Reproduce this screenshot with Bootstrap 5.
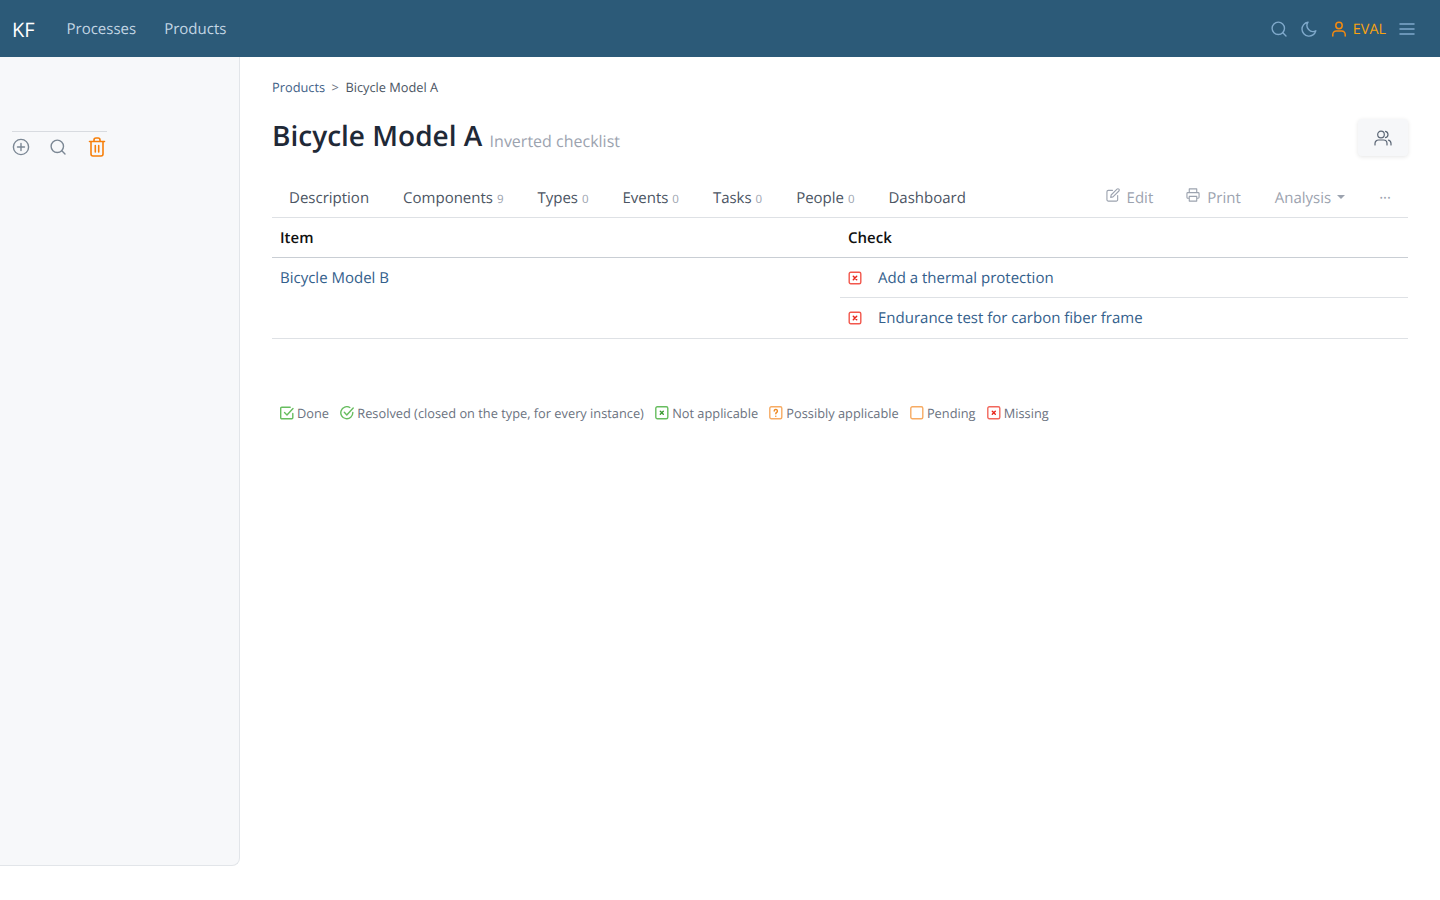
<!DOCTYPE html>
<html lang="en">
<head>
  <meta charset="UTF-8">
  <title>Bicycle Model A</title>
  <meta name="viewport" content="width=device-width, initial-scale=1" />
  <link href="https://cdn.jsdelivr.net/npm/bootstrap@5.3.2/dist/css/bootstrap.min.css" rel="stylesheet">
  <style>
    body {
      background: #fff;
      font-family: "Open Sans", sans-serif;
      font-size: 15px;
      color: #1f2937;
      height: 900px;
      overflow: hidden;
      text-rendering: geometricPrecision;
    }
    svg { display: block; fill: none; stroke: currentColor; stroke-width: 2; stroke-linecap: round; stroke-linejoin: round; }
    a { text-decoration: none; }
    .top-bar { height: 57px; background: #2c5a78; padding: 2px 25px 0 12px; }
    .top-brand { color: #fff; font-size: 20px; width: 54.5px; }
    .top-link { color: #c3d6e4; font-size: 15px; margin-right: 28px; }
    .top-icon { color: #7fa9cb; }
    .top-user { color: #f68a0e; }
    .top-eval { color: #f9a30f; font-size: 14.4px; }
    .side-panel { width: 240px; height: 809px; background: #f7f8fa; border-right: 1px solid #e2e5e9; border-bottom: 1px solid #e2e5e9; border-bottom-right-radius: 8px; padding: 74px 0 0 12px; flex-shrink: 0; }
    .side-tools { width: 95px; border-top: 1px solid #d8dbe0; padding-top: 5px; gap: 20px; }
    .main-pane { padding: 22px 32px 0; flex-grow: 1; min-width: 0; }
    .crumbs { font-size: 12.8px; line-height: 17px; color: #4b5563; }
    .crumbs a { color: #3f6288; }
    .crumb-sep { margin: 0 6.5px; color: #6b7280; }
    .title-row { margin-top: 21px; height: 38px; }
    .page-title { font-size: 28px; font-weight: 600; line-height: 38px; height: 38px; margin: 0; color: #1f2937; }
    .page-sub { font-size: 16px; color: #9ca3af; font-weight: 400; vertical-align: -1px; }
    .people-btn { width: 50px; height: 37px; margin-top: 2px; background: #f6f7f9; border-radius: 4px; box-shadow: 0 1px 4px rgba(0,0,0,.1); color: #5b6675; }
    .tab-row { border-bottom: 1px solid #dee1e5; height: 38px; margin-top: 25px; }
    .tab-item { color: #4b5563; padding: 0 17px 2px; font-size: 15px; line-height: 34px; }
    .tab-count { color: #9ca3af; font-size: 11.5px; line-height: 1; }
    .tab-act { color: #9ca3af; }
    .tab-edit { padding-right: 16px; }
    .tab-glyph { margin-right: 7px; margin-top: -6px; stroke-width: 1.2; }
    .grid-head { font-weight: 600; font-size: 15px; color: #111; height: 40px; padding-top: 2px; border-bottom: 1px solid #c9ced4; }
    .grid-head > div, .grid-body > div { width: 50%; padding-left: 8px; }
    .grid-body { border-bottom: 1px solid #dee1e5; }
    .grid-body a, .check-row a { color: #33608c; }
    .grid-body > .check-col { padding-left: 0; }
    .grid-body > .item-col { padding-top: 10px; line-height: 20px; }
    .check-row { height: 40px; padding-left: 8px; gap: 16px; line-height: 20px; }
    .check-row:first-child { padding-top: 1px; border-bottom: 1px solid #dee1e5; }
    .key-row { margin-top: 64px; padding-left: 8px; font-size: 12.8px; color: #6b7280; gap: 11.25px; line-height: 20px; }
    .key-item { gap: 3px; }
    .st-box { stroke-width: 1.4; }
  </style>
</head>
<body>

<nav class="top-bar d-flex align-items-center">
  <a href="#" class="top-brand">KF</a>
  <a href="#" class="top-link">Processes</a>
  <a href="#" class="top-link">Products</a>
  <div class="ms-auto d-flex align-items-center">
    <svg class="top-icon" width="16" height="16" viewBox="0 0 16 16" style="stroke-width:1.4"><circle cx="7.300" cy="7.300" r="6.200"/><path d="M11.800 11.800 15 15"/></svg>
    <svg class="top-icon" width="16" height="16" viewBox="0 0 16 16" style="stroke-width:1.4;margin-left:14px"><path d="M7 1.200a7 7 0 1 0 7.800 8.600A6 6 0 0 1 7 1.200z"/></svg>
    <svg class="top-user" width="16" height="16" viewBox="0 0 16 16" style="stroke-width:1.5;margin-left:14px"><circle cx="8" cy="4.500" r="3.200"/><path d="M1.800 15v-1.500a3.500 3.500 0 0 1 3.500-3.500h5.400a3.500 3.500 0 0 1 3.500 3.500V15"/></svg>
    <span class="top-eval" style="margin-left:6px">EVAL</span>
    <svg class="top-icon" width="16" height="16" viewBox="0 0 16 16" style="stroke-width:1.5;margin-left:13px"><path d="M1 3h14M1 8h14M1 13h14"/></svg>
  </div>
</nav>

<div class="d-flex">
  <aside class="side-panel">
    <div class="side-tools d-flex align-items-center">
      <svg width="18" height="18" viewBox="0 0 18 18" style="color:#7b8794;stroke-width:1.4"><circle cx="9" cy="9" r="7.600"/><path d="M9 5.500v7M5.500 9h7"/></svg>
      <svg width="16" height="16" viewBox="0 0 16 16" style="color:#7b8794;stroke-width:1.4"><circle cx="7.300" cy="7.300" r="6.200"/><path d="M11.800 11.800 15 15"/></svg>
      <svg width="18" height="20" viewBox="0 0 18 20" style="color:#f77f0a;stroke-width:1.600;margin-left:2px"><path d="M1.500 4.500h15M3 4.500V17a2 2 0 0 0 2 2h8a2 2 0 0 0 2-2V4.500M6 4.500V3a2 2 0 0 1 2-2h2a2 2 0 0 1 2 2v1.500M7.300 8.500v6.500M10.700 8.500v6.500"/></svg>
    </div>
  </aside>

  <main class="main-pane">
    <div class="crumbs"><a href="#">Products</a><span class="crumb-sep">&gt;</span>Bicycle Model A</div>

    <div class="title-row d-flex justify-content-between align-items-start">
      <h1 class="page-title">Bicycle Model A <span class="page-sub">Inverted checklist</span></h1>
      <div class="people-btn d-flex align-items-center justify-content-center">
        <svg width="18" height="16" viewBox="0 0 18 16" style="stroke-width:1.200"><circle cx="7" cy="4.500" r="3.300"/><path d="M1 15v-1.500A3.500 3.500 0 0 1 4.500 10h5a3.500 3.500 0 0 1 3.500 3.500V15M11.500 1.300a3.300 3.300 0 0 1 0 6.400M14.500 10.200a3.500 3.500 0 0 1 2.500 3.300V15"/></svg>
      </div>
    </div>

    <div class="tab-row d-flex align-items-center">
      <a href="#" class="tab-item">Description</a>
      <a href="#" class="tab-item">Components <span class="tab-count">9</span></a>
      <a href="#" class="tab-item">Types <span class="tab-count">0</span></a>
      <a href="#" class="tab-item">Events <span class="tab-count">0</span></a>
      <a href="#" class="tab-item">Tasks <span class="tab-count">0</span></a>
      <a href="#" class="tab-item">People <span class="tab-count">0</span></a>
      <a href="#" class="tab-item">Dashboard</a>
      <div class="ms-auto d-flex align-items-center">
        <a href="#" class="tab-item tab-act tab-edit d-flex align-items-center">
          <svg class="tab-glyph" width="14" height="14" viewBox="0 0 15 15"><path d="M7 2.500H2.500a1.500 1.500 0 0 0-1.500 1.500v8.500A1.500 1.500 0 0 0 2.500 14H11a1.500 1.500 0 0 0 1.500-1.500V8M11.800 1.200a1.300 1.300 0 0 1 2 2L7.500 9.500 5 10l.5-2.500z"/></svg>Edit</a>
        <a href="#" class="tab-item tab-act d-flex align-items-center">
          <svg class="tab-glyph" width="14" height="14" viewBox="0 0 15 15"><path d="M3.500 5V1h8v4M3.500 11H2a1 1 0 0 1-1-1V6a1 1 0 0 1 1-1h11a1 1 0 0 1 1 1v4a1 1 0 0 1-1 1h-1.500M3.500 9h8v5h-8z"/></svg>Print</a>
        <a href="#" class="tab-item tab-act d-flex align-items-center">Analysis<span class="dropdown-toggle" style="margin-left:6px"></span></a>
        <a href="#" class="tab-item tab-act">···</a>
      </div>
    </div>

    <div class="grid-head d-flex align-items-center">
      <div>Item</div>
      <div>Check</div>
    </div>
    <div class="grid-body d-flex">
      <div class="item-col"><a href="#">Bicycle Model B</a></div>
      <div class="check-col">
        <div class="check-row d-flex align-items-center">
          <svg class="st-box" width="14" height="14" viewBox="0 0 14 14" style="color:#f2574c"><rect x="1.200" y="1.200" width="11.600" height="11.600" rx="1.500"/><path d="M5.300 5.300l3.400 3.400M8.700 5.300 5.300 8.700" style="stroke:#e8261c;stroke-width:1.500"/></svg>
          <a href="#">Add a thermal protection</a>
        </div>
        <div class="check-row d-flex align-items-center">
          <svg class="st-box" width="14" height="14" viewBox="0 0 14 14" style="color:#f2574c"><rect x="1.200" y="1.200" width="11.600" height="11.600" rx="1.500"/><path d="M5.300 5.300l3.400 3.400M8.700 5.300 5.300 8.700" style="stroke:#e8261c;stroke-width:1.500"/></svg>
          <a href="#">Endurance test for carbon fiber frame</a>
        </div>
      </div>
    </div>

    <div class="key-row d-flex align-items-center">
      <span class="key-item d-flex align-items-center">
        <svg class="st-box" width="14" height="14" viewBox="0 0 14 14" style="color:#67bd5f"><path d="M12.800 7.500v4.300a1 1 0 0 1-1 1H1.700a1 1 0 0 1-1-1V2.200a1 1 0 0 1 1-1h8.500"/><path d="M4.500 6.500 7 9l6-6.500"/></svg>Done</span>
      <span class="key-item d-flex align-items-center">
        <svg class="st-box" width="14" height="14" viewBox="0 0 14 14" style="color:#67bd5f"><path d="M12.800 6.500a6 6 0 1 1-3-5"/><path d="M4.300 6.300 6.800 9l6.400-7"/></svg>Resolved (closed on the type, for every instance)</span>
      <span class="key-item d-flex align-items-center">
        <svg class="st-box" width="14" height="14" viewBox="0 0 14 14" style="color:#67bd5f"><rect x=".8" y=".8" width="12" height="12" rx="1.500"/><path d="M5.300 5.300l3 3M8.300 5.300l-3 3" style="stroke:#3a9a30"/></svg>Not applicable</span>
      <span class="key-item d-flex align-items-center">
        <svg class="st-box" width="14" height="14" viewBox="0 0 14 14" style="color:#f7ab63"><rect x=".8" y=".8" width="12" height="12" rx="1.500"/><path d="M5.200 5a1.600 1.600 0 1 1 2.500 1.400c-.6.400-.9.700-.9 1.300M6.800 10.100v.1" style="stroke:#ee8a22"/></svg>Possibly applicable</span>
      <span class="key-item d-flex align-items-center">
        <svg class="st-box" width="14" height="14" viewBox="0 0 14 14" style="color:#f7ab63"><rect x=".8" y=".8" width="12" height="12" rx="1.500"/></svg>Pending</span>
      <span class="key-item d-flex align-items-center">
        <svg class="st-box" width="14" height="14" viewBox="0 0 14 14" style="color:#f2675c"><rect x=".8" y=".8" width="12" height="12" rx="1.500"/><path d="M5.300 5.300l3 3M8.300 5.300l-3 3" style="stroke:#e8261c"/></svg>Missing</span>
    </div>
  </main>
</div>

<script src="https://cdn.jsdelivr.net/npm/bootstrap@5.3.2/dist/js/bootstrap.bundle.min.js"></script>
</body>
</html>
